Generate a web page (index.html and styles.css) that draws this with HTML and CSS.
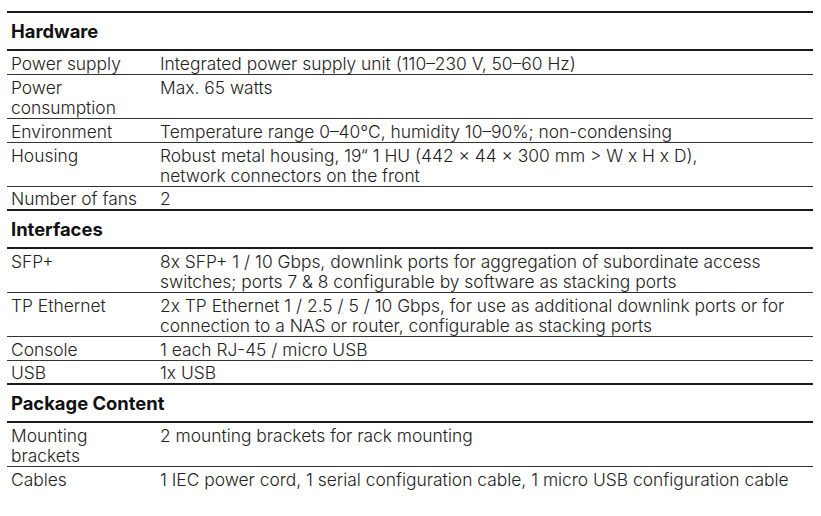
FILE: index.html
```html
<!DOCTYPE html>
<html>
<head>
<meta charset="utf-8">
<link rel="stylesheet" href="styles.css">
</head>
<body>
<div class="spec">
  <div class="section">Hardware</div>
  <div class="row"><div class="key">Power supply</div><div class="val">Integrated power supply unit (110–230 V, 50–60 Hz)</div></div>
  <div class="row"><div class="key">Power<br>consumption</div><div class="val">Max. 65 watts</div></div>
  <div class="row"><div class="key">Environment</div><div class="val">Temperature range 0–40°C, humidity 10–90%; non-condensing</div></div>
  <div class="row"><div class="key">Housing</div><div class="val">Robust metal housing, 19“ 1 HU (442 × 44 × 300 mm &gt; W x H x D),<br>network connectors on the front</div></div>
  <div class="row last"><div class="key">Number of fans</div><div class="val">2</div></div>

  <div class="section">Interfaces</div>
  <div class="row"><div class="key">SFP+</div><div class="val">8x SFP+ 1 / 10 Gbps, downlink ports for aggregation of subordinate access<br>switches; ports 7 &amp; 8 configurable by software as stacking ports</div></div>
  <div class="row"><div class="key">TP Ethernet</div><div class="val">2x TP Ethernet 1 / 2.5 / 5 / 10 Gbps, for use as additional downlink ports or for<br>connection to a NAS or router, configurable as stacking ports</div></div>
  <div class="row"><div class="key">Console</div><div class="val">1 each RJ-45 / micro USB</div></div>
  <div class="row last"><div class="key">USB</div><div class="val">1x USB</div></div>

  <div class="section">Package Content</div>
  <div class="row"><div class="key">Mounting<br>brackets</div><div class="val">2 mounting brackets for rack mounting</div></div>
  <div class="row end"><div class="key">Cables</div><div class="val">1 IEC power cord, 1 serial configuration cable, 1 micro USB configuration cable</div></div>
</div>
</body>
</html>
```

FILE: styles.css
```css
html, body {
  margin: 0;
  padding: 0;
  background: #ffffff;
}
body {
  padding: 11px 8px 0 7px;
  font-family: Inter, "Noto Sans", sans-serif;
  color: #222222;
}
.spec {
  width: 806px;
  border-top: 2px solid #1a1a1a;
  font-size: 17.4px;
  font-weight: 300;
  line-height: 20px;
}
.section {
  box-sizing: border-box;
  height: 38px;
  display: flex;
  align-items: center;
  padding: 0 4px 1px;
  font-size: 18.4px;
  font-weight: 700;
  color: #111111;
  border-bottom: 2px solid #1a1a1a;
}
.row {
  display: grid;
  grid-template-columns: 153px 1fr;
  padding-top: 3px;
  border-bottom: 1px solid #333333;
}
.row.last {
  padding-top: 2px;
  border-bottom: 2px solid #1a1a1a;
}
.row.end {
  border-bottom: none;
}
.key {
  padding-left: 4px;
}
```
